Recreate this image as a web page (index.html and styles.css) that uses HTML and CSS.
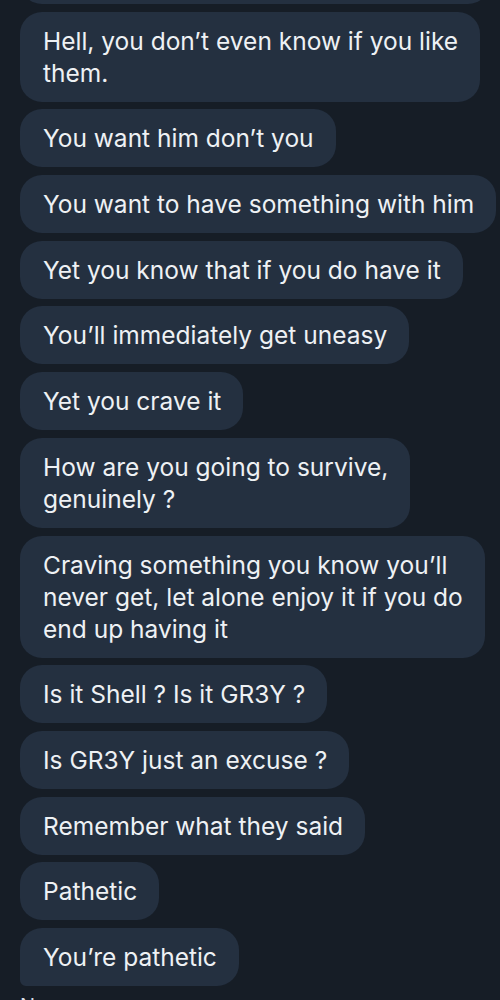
FILE: index.html
```html
<!DOCTYPE html>
<html>
<head>
<meta charset="utf-8">
<link rel="stylesheet" href="styles.css">
</head>
<body>
<div class="chat">
  <div class="bubble first"></div>
  <div class="bubble">Hell, you don’t even know if you like<br>them.</div>
  <div class="bubble">You want him don’t you</div>
  <div class="bubble">You want to have something with him</div>
  <div class="bubble">Yet you know that if you do have it</div>
  <div class="bubble">You’ll immediately get uneasy</div>
  <div class="bubble">Yet you crave it</div>
  <div class="bubble">How are you going to survive,<br>genuinely ?</div>
  <div class="bubble">Craving something you know you’ll<br>never get, let alone enjoy it if you do<br>end up having it</div>
  <div class="bubble">Is it Shell ? Is it GR3Y ?</div>
  <div class="bubble">Is GR3Y just an excuse ?</div>
  <div class="bubble">Remember what they said</div>
  <div class="bubble">Pathetic</div>
  <div class="bubble last">You’re pathetic</div>
  <div class="next">N</div>
</div>
</body>
</html>
```
FILE: styles.css
```css
html, body {
  margin: 0;
  padding: 0;
  background: #161d26;
  height: 1000px;
  overflow: hidden;
}
.chat {
  display: flex;
  flex-direction: column;
  align-items: flex-start;
  gap: 7.7px;
  padding-left: 20px;
  font-family: Inter, "Noto Sans", sans-serif;
}
.bubble {
  background: #243040;
  color: #eef1f4;
  font-size: 24.5px;
  line-height: 32px;
  padding: 13px 22px 13px 23px;
  border-radius: 22px;
  white-space: nowrap;
}
.first {
  margin-top: -54px;
  width: 425px;
  height: 32px;
}
.last {
  border-bottom-left-radius: 6px;
}
.next {
  color: #d8dde3;
  font-size: 20px;
  line-height: 24px;
  margin-top: 0;
}
```
